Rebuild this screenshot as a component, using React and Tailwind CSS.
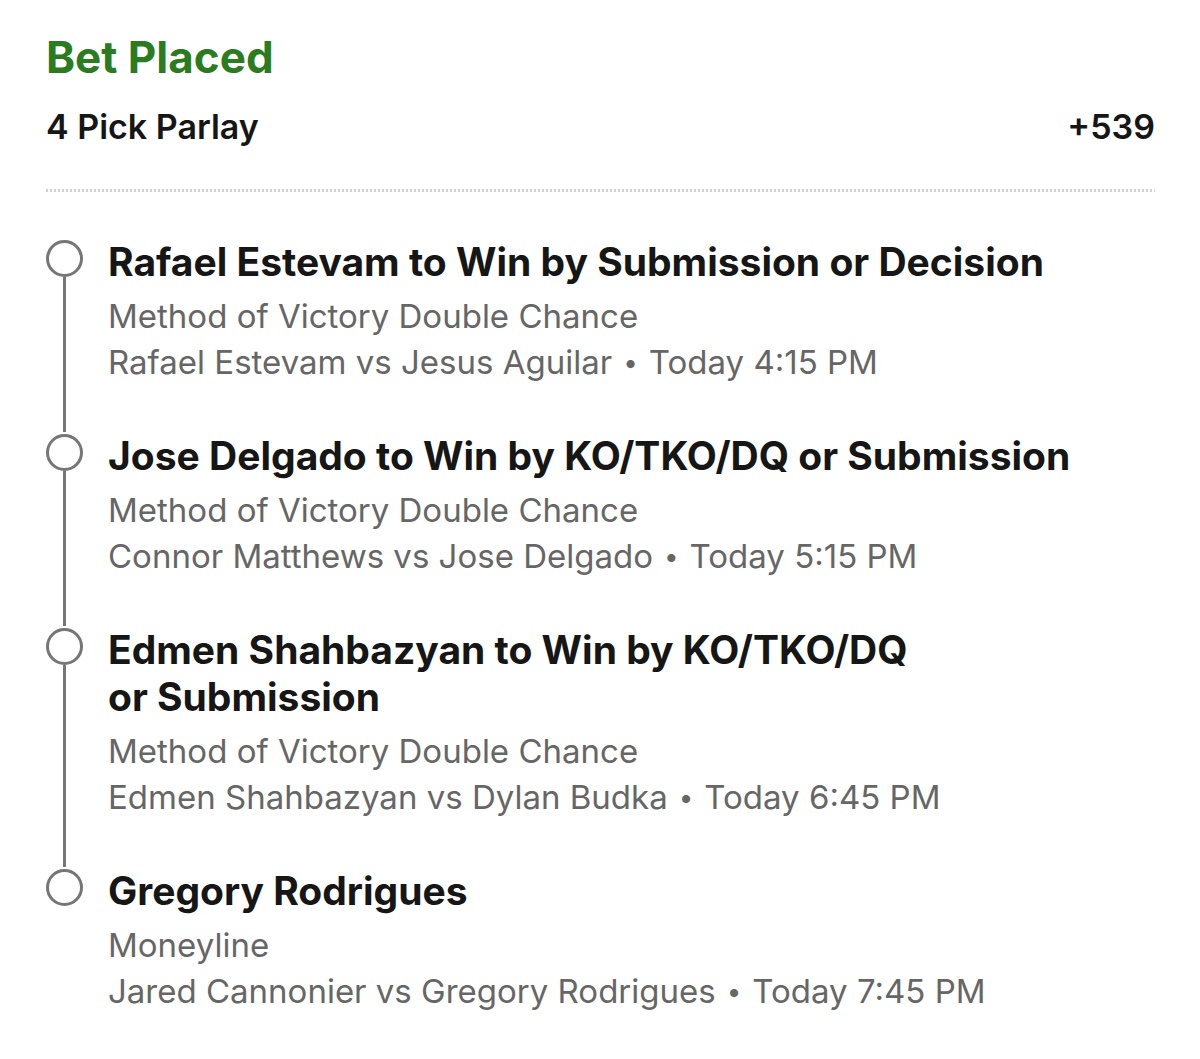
import React from "react";

const picks = [
  {
    title: ["Rafael Estevam to Win by Submission or Decision"],
    market: "Method of Victory Double Chance",
    matchup: "Rafael Estevam vs Jesus Aguilar",
    time: "Today 4:15 PM",
  },
  {
    title: ["Jose Delgado to Win by KO/TKO/DQ or Submission"],
    market: "Method of Victory Double Chance",
    matchup: "Connor Matthews vs Jose Delgado",
    time: "Today 5:15 PM",
  },
  {
    title: ["Edmen Shahbazyan to Win by KO/TKO/DQ", "or Submission"],
    market: "Method of Victory Double Chance",
    matchup: "Edmen Shahbazyan vs Dylan Budka",
    time: "Today 6:45 PM",
  },
  {
    title: ["Gregory Rodrigues"],
    market: "Moneyline",
    matchup: "Jared Cannonier vs Gregory Rodrigues",
    time: "Today 7:45 PM",
  },
];

function PickRow({ pick, last }) {
  return (
    <div className="flex">
      {/* timeline column */}
      <div className="flex w-[62px] shrink-0 flex-col items-start">
        <div className="mt-[2px] h-[37px] w-[37px] shrink-0 rounded-full border-[3px] border-[#767676] bg-white" />
        {!last && <div className="ml-[17px] w-[3px] flex-1 bg-[#767676]" />}
      </div>

      <div className={last ? "" : "pb-[47px]"}>
        <div className="text-[39px] font-bold leading-[47px] text-[#161616]">
          {pick.title.map((line) => (
            <div key={line}>{line}</div>
          ))}
        </div>
        <div className="mt-[8px] text-[33px] leading-[46px] text-[#666666]">
          <div>{pick.market}</div>
          <div className="h-[46px]">
            {pick.matchup}
            <span className="mx-[11px] align-[2px] text-[26px] leading-[0]">•</span>
            {pick.time}
          </div>
        </div>
      </div>
    </div>
  );
}

export default function App() {
  return (
    <div
      className="min-h-[1059px] w-[1200px] bg-white pl-[46px] pr-[45px] pt-[30px]"
      style={{ fontFamily: "Inter, 'Noto Sans', sans-serif" }}
    >
      <div className="text-[44px] font-bold leading-[54px] text-[#2b7c1f]">Bet Placed</div>
      <div className="mt-[23px] flex items-center justify-between text-[34px] font-semibold leading-[40px] text-[#161616]">
        <span>4 Pick Parlay</span>
        <span>+539</span>
      </div>

      <div className="mt-[42px] h-[3px] w-full bg-[repeating-linear-gradient(90deg,#d2d2d2_0_2px,transparent_2px_4px)]" />

      <div className="mt-[46px] flex flex-col">
        {picks.map((pick, i) => (
          <PickRow key={i} pick={pick} last={i === picks.length - 1} />
        ))}
      </div>
    </div>
  );
}
